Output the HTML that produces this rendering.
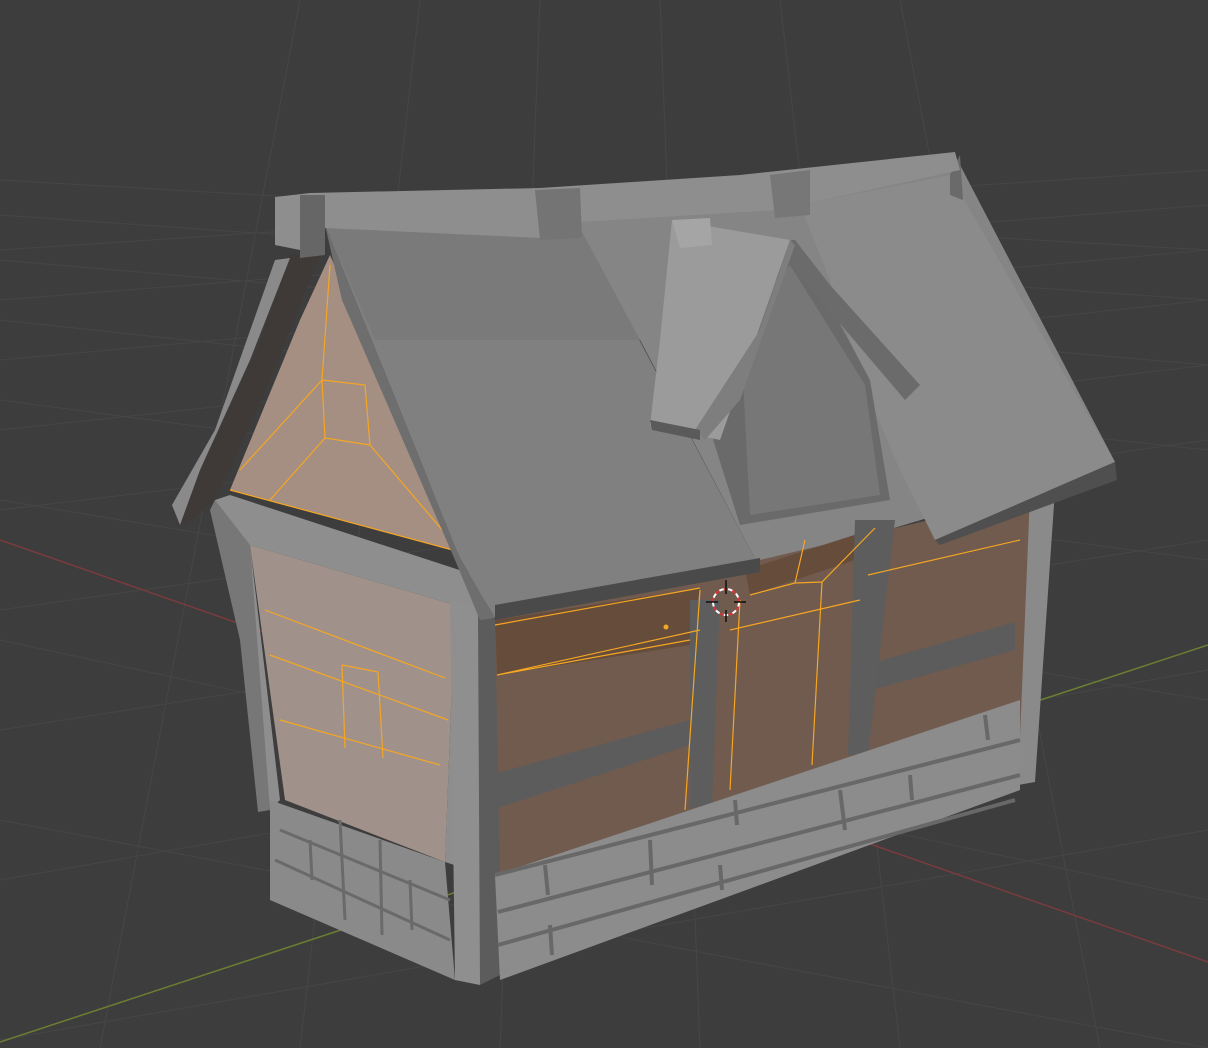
<!DOCTYPE html>
<html><head><meta charset="utf-8"><style>
html,body{margin:0;padding:0;background:#3d3d3d;overflow:hidden}
svg{display:block}
</style></head><body>
<svg width="1208" height="1048" viewBox="0 0 1208 1048" xmlns="http://www.w3.org/2000/svg">
<rect width="1208" height="1048" fill="#3d3d3d"/>
<g stroke="#464646" stroke-width="1" fill="none">
<path d="M0 250 L1208 170 M0 300 L1208 205 M0 360 L1208 250 M0 430 L1208 300 M0 510 L1208 365 M0 610 L1208 440 M0 730 L1208 540 M0 880 L1208 670 M0 1040 L1208 830"/>
<path d="M0 180 L1208 250 M0 215 L1208 300 M0 260 L1208 365 M0 320 L1208 450 M0 400 L1208 560 M0 500 L1208 700 M0 640 L1208 900 M0 820 L1208 1048"/>
<path d="M100 1048 L300 0 M300 1048 L420 0 M500 1048 L540 0 M700 1048 L660 0 M900 1048 L780 0 M1100 1048 L900 0"/>
</g>
<line x1="0" y1="540" x2="1208" y2="962" stroke="#7a3b3e" stroke-width="1.5"/>
<line x1="0" y1="1042" x2="1208" y2="645" stroke="#6b7f32" stroke-width="1.5"/>

<!-- back roof fill -->
<polygon points="560,215 960,165 1115,462 760,568 640,340" fill="#858585"/>

<!-- left gable -->
<polygon points="330,255 300,320 230,490 460,552 380,370" fill="#a58f82"/>
<polygon points="290,255 320,255 270,380 230,470 215,500 185,525 172,505 215,440 260,340" fill="#3f3a37"/>
<polygon points="275,260 290,258 250,360 200,470 180,525 172,505 215,430" fill="#8a8a8a"/>
<!-- left side wall -->
<polygon points="250,545 455,605 445,862 285,800" fill="#a0928a"/>
<!-- left frame -->
<polygon points="215,500 230,495 490,580 485,615 470,870 445,862 455,605 250,545 280,800 270,810 250,640" fill="#8e8e8e"/>
<polygon points="210,510 215,500 250,545 270,810 258,812 240,640" fill="#777"/>
<polygon points="450,600 490,612 480,985 455,980" fill="#8f8f8f"/>
<polygon points="478,615 500,620 500,975 480,985" fill="#5c5c5c"/>
<!-- left bricks -->
<polygon points="270,800 445,862 455,980 270,900" fill="#8a8a8a"/>
<g stroke="#6a6a6a" stroke-width="3"><path d="M280,830 L450,900 M275,860 L450,940 M340,820 L345,920 M380,840 L382,935 M310,840 L312,880 M410,880 L412,930"/></g>

<!-- front wall -->
<polygon points="495,620 760,560 1035,495 1020,785 500,875" fill="#705b4e"/>
<polygon points="495,620 700,588 690,645 497,675" fill="#664c3a"/>
<polygon points="745,570 870,530 870,555 750,595" fill="#664c3a"/>
<!-- front beams -->
<polygon points="490,775 690,720 690,745 492,810" fill="#5c5c5c"/>
<polygon points="865,665 1015,622 1015,650 865,692" fill="#5c5c5c"/>
<polygon points="690,600 720,600 712,805 690,808" fill="#5d5d5d"/>
<polygon points="855,520 895,520 868,755 848,755" fill="#5d5d5d"/>
<polygon points="1030,495 1055,490 1035,782 1018,785" fill="#8a8a8a"/>
<!-- front bricks -->
<polygon points="495,875 1020,700 1020,790 500,980" fill="#8c8c8c"/>
<g stroke="#686868" stroke-width="4"><path d="M495,875 L1020,740 M498,912 L1020,775 M498,945 L1015,800 M545,865 L548,895 M650,840 L652,885 M720,865 L722,890 M840,790 L845,830 M910,775 L912,800 M985,715 L988,740 M550,925 L552,955 M735,800 L737,825"/></g>

<!-- orange edges -->
<g stroke="#f5a623" stroke-width="1.2" fill="none">
<path d="M330,265 L322,380 L325,438 L370,445 L365,385 L322,380 M325,438 L270,500 M370,445 L455,545 M230,490 L460,552 M240,470 L322,380"/>
<path d="M265,610 L445,678 M270,655 L448,720 M280,720 L440,765 M342,665 L345,748 M378,672 L383,758 M342,665 L378,672"/>
<path d="M497,675 L690,640 M730,630 L860,600 M700,590 L685,810 M740,600 L730,790 M822,582 L812,765 M497,675 L700,630 M750,595 L795,583 L805,540 M795,583 L822,582 L875,528 M868,575 L1020,540 M495,625 L700,588"/>
</g>

<!-- main roof -->
<polygon points="325,225 580,228 760,568 495,618 460,558" fill="#808080"/>
<polygon points="325,225 580,228 640,340 375,340" fill="#7a7a7a"/>
<polygon points="325,225 460,558 495,618 480,620 455,560 342,300" fill="#6e6e6e"/>
<polygon points="495,605 760,558 760,572 495,620" fill="#4a4a4a"/>
<!-- right roof -->
<polygon points="800,205 950,175 1115,462 935,540 900,470 870,400 830,280" fill="#8b8b8b"/>
<polygon points="935,540 1115,462 1117,480 940,545" fill="#4f4f4f"/>
<polygon points="950,175 960,155 963,200 950,195" fill="#6a6a6a"/>
<!-- dormer -->
<polygon points="700,245 795,240 870,380 890,500 740,525 710,430" fill="#6a6a6a"/>
<polygon points="740,320 790,265 865,385 880,495 750,515" fill="#777"/>
<polygon points="795,240 830,285 920,385 905,400 820,300 790,262" fill="#6b6b6b"/>
<polygon points="672,220 790,240 720,440 650,425 660,340" fill="#9b9b9b"/>
<polygon points="790,240 795,245 740,400 705,440 695,430 760,330" fill="#7e7e7e"/>
<polygon points="650,420 700,430 700,440 652,430" fill="#5a5a5a"/>
<!-- ridge -->
<polygon points="275,197 310,193 540,188 740,175 955,152 960,170 778,210 580,222 540,238 325,228 300,250 275,245" fill="#8e8e8e"/>
<polygon points="300,195 325,195 325,255 300,258" fill="#666"/>
<polygon points="535,190 580,188 582,238 540,240" fill="#747474"/>
<polygon points="770,175 810,170 810,215 775,218" fill="#777"/>
<polygon points="672,220 710,218 712,245 680,248" fill="#a5a5a5"/>

<!-- 3D cursor -->
<circle cx="726" cy="602" r="13" fill="none" stroke="#fff" stroke-width="2" stroke-dasharray="5 4"/>
<circle cx="726" cy="602" r="13" fill="none" stroke="#d33" stroke-width="2" stroke-dasharray="4 5" stroke-dashoffset="4.5"/>
<path d="M726,580 V594 M726,610 V622 M706,602 H718 M734,602 H746" stroke="#111" stroke-width="1.5"/>
<circle cx="666" cy="627" r="2.5" fill="#f5a623"/>
</svg>
</body></html>
